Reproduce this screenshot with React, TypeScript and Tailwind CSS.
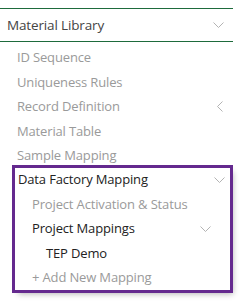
import React from "react";

const font = { fontFamily: '"Open Sans", "Noto Sans", sans-serif' };

function Chevron({ className = "" }: { className?: string }) {
	return (
		<svg width="11" height="6" viewBox="0 0 11 6" className={className}>
			<path d="M0.5 0.5 L5.5 5.5 L10.5 0.5" fill="none" stroke="#b3b3b3" strokeWidth="1" />
		</svg>
	);
}

function ChevronLeft() {
	return (
		<svg width="6" height="11" viewBox="0 0 6 11">
			<path d="M5.5 0.5 L0.5 5.5 L5.5 10.5" fill="none" stroke="#b3b3b3" strokeWidth="1" />
		</svg>
	);
}

const subItems = ["ID Sequence", "Uniqueness Rules", "Record Definition", "Material Table", "Sample Mapping"];

export default function App() {
	return (
		<div className="w-[240px] h-[301px] bg-white overflow-hidden pt-2 tracking-[-0.15px]" style={font}>
			{/* header */}
			<div className="w-[233px] h-[34px] border-y border-[#1e6b3c] flex items-center justify-between pl-[7px] pr-[9px]">
				<span className="text-[13.5px] text-[#444]">Material Library</span>
				<Chevron />
			</div>

			{/* sub items */}
			<div className="pt-[4px]">
				{subItems.map((item) => (
					<div key={item} className="h-[24.4px] flex items-center justify-between pl-[17px] pr-[17px]">
						<span className="text-[13px] text-[#9a9a9a]">{item}</span>
						{item === "Record Definition" && <ChevronLeft />}
					</div>
				))}

				{/* highlighted group */}
				<div className="ml-[15px] w-[215px] outline-[3px] outline-solid outline-[#64298e] shadow-[3px_4px_6px_rgba(0,0,0,0.3)]">
					<div className="h-[24.4px] flex items-center justify-between pl-[3px] pr-[5px]">
						<span className="text-[13px] text-[#222]">Data Factory Mapping</span>
						<Chevron />
					</div>
					<div className="h-[24.4px] flex items-center pl-[17px]">
						<span className="text-[13px] text-[#9a9a9a]">Project Activation &amp; Status</span>
					</div>
					<div className="h-[24.4px] flex items-center justify-between pl-[17px] pr-[19px]">
						<span className="text-[13px] text-[#222]">Project Mappings</span>
						<Chevron />
					</div>
					<div className="h-[24.4px] flex items-center pl-[31px]">
						<span className="text-[13px] text-[#222]">TEP Demo</span>
					</div>
					<div className="h-[24.4px] flex items-center pl-[17px]">
						<span className="text-[13px] text-[#9a9a9a]">+ Add New Mapping</span>
					</div>
				</div>
			</div>
		</div>
	);
}
